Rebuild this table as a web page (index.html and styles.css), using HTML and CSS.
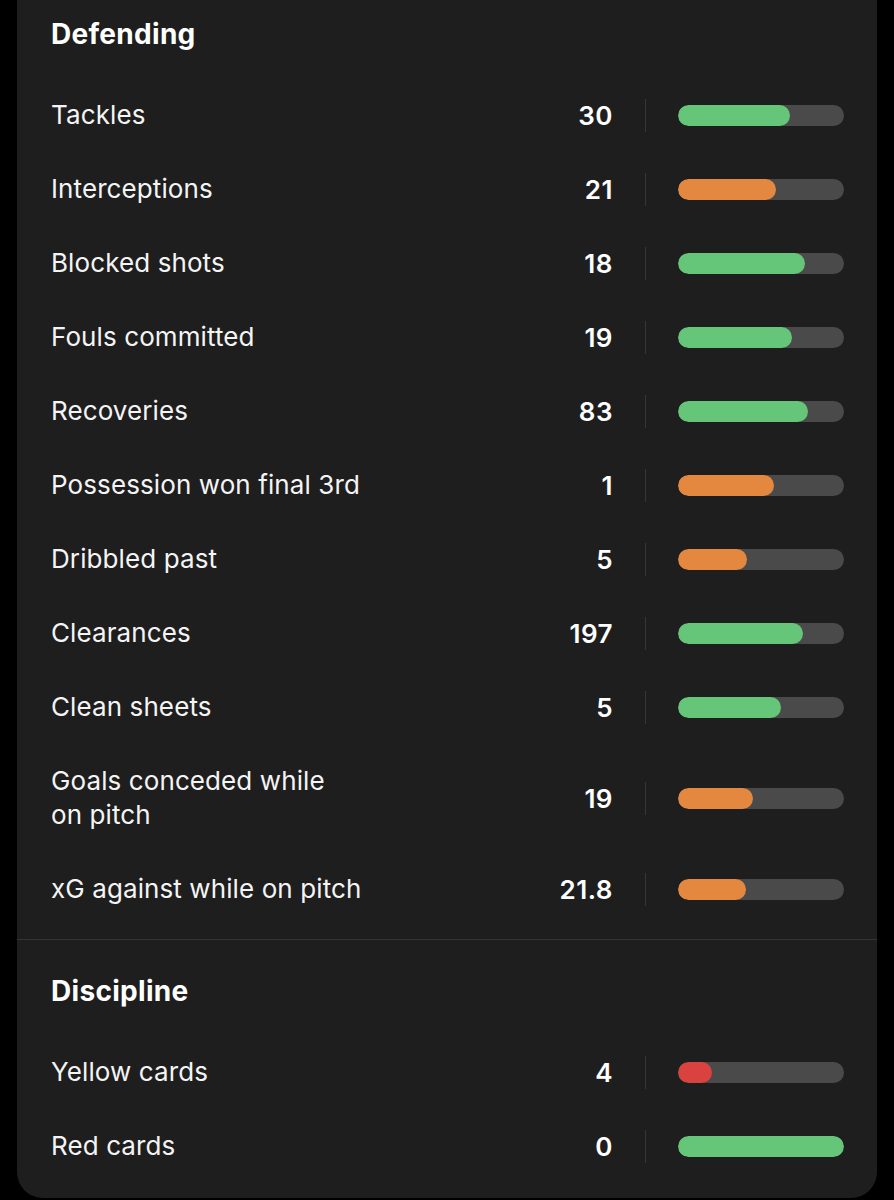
FILE: index.html
```html
<!DOCTYPE html>
<html>
<head>
<meta charset="utf-8">
<link rel="stylesheet" href="styles.css">
</head>
<body>
<div class="card">
  <section class="section first">
    <h2 class="heading">Defending</h2>
    <div class="row"><div class="label">Tackles</div><div class="num">30</div><div class="sep"></div><div class="bar"><div class="fill green" style="width:112px"></div></div></div>
    <div class="row"><div class="label">Interceptions</div><div class="num">21</div><div class="sep"></div><div class="bar"><div class="fill orange" style="width:98px"></div></div></div>
    <div class="row"><div class="label">Blocked shots</div><div class="num">18</div><div class="sep"></div><div class="bar"><div class="fill green" style="width:127px"></div></div></div>
    <div class="row"><div class="label">Fouls committed</div><div class="num">19</div><div class="sep"></div><div class="bar"><div class="fill green" style="width:114px"></div></div></div>
    <div class="row"><div class="label">Recoveries</div><div class="num">83</div><div class="sep"></div><div class="bar"><div class="fill green" style="width:130px"></div></div></div>
    <div class="row"><div class="label">Possession won final 3rd</div><div class="num">1</div><div class="sep"></div><div class="bar"><div class="fill orange" style="width:96px"></div></div></div>
    <div class="row"><div class="label">Dribbled past</div><div class="num">5</div><div class="sep"></div><div class="bar"><div class="fill orange" style="width:69px"></div></div></div>
    <div class="row"><div class="label">Clearances</div><div class="num">197</div><div class="sep"></div><div class="bar"><div class="fill green" style="width:125px"></div></div></div>
    <div class="row"><div class="label">Clean sheets</div><div class="num">5</div><div class="sep"></div><div class="bar"><div class="fill green" style="width:103px"></div></div></div>
    <div class="row"><div class="label">Goals conceded while<br>on pitch</div><div class="num">19</div><div class="sep"></div><div class="bar"><div class="fill orange" style="width:75px"></div></div></div>
    <div class="row"><div class="label">xG against while on pitch</div><div class="num">21.8</div><div class="sep"></div><div class="bar"><div class="fill orange" style="width:68px"></div></div></div>
  </section>
  <section class="section second">
    <h2 class="heading">Discipline</h2>
    <div class="row"><div class="label">Yellow cards</div><div class="num">4</div><div class="sep"></div><div class="bar"><div class="fill red" style="width:34px"></div></div></div>
    <div class="row"><div class="label">Red cards</div><div class="num">0</div><div class="sep"></div><div class="bar"><div class="fill green" style="width:166px"></div></div></div>
  </section>
</div>
</body>
</html>
```

FILE: styles.css
```css
html, body {
  margin: 0;
  padding: 0;
  background: #000;
}
body {
  font-family: Inter, "Noto Sans", sans-serif;
  color: #fff;
}
.card {
  margin: 0 17px;
  background: #1e1e1e;
  border-radius: 0 0 26px 26px;
  padding-bottom: 15px;
}
.section {
  padding: 0 33px 0 34px;
}
.section.first {
  padding-top: 17px;
  padding-bottom: 13px;
  border-bottom: 1px solid #343434;
}
.section.second {
  padding-top: 34px;
}
.heading {
  margin: 0 0 27px;
  font-size: 28px;
  line-height: 34px;
  font-weight: 700;
  letter-spacing: 0.3px;
}
.row {
  display: grid;
  grid-template-columns: 1fr auto 1px 166px;
  align-items: center;
  column-gap: 32px;
  padding: 20px 0;
}
.label {
  font-size: 26px;
  line-height: 34px;
  font-weight: 400;
  letter-spacing: 0.1px;
  color: #f4f4f4;
}
.num {
  font-size: 26px;
  line-height: 30px;
  font-weight: 600;
  letter-spacing: 0.5px;
  text-align: right;
  padding-top: 2px;
}
.sep {
  width: 1px;
  height: 33px;
  background: #363636;
}
.bar {
  height: 21px;
  border-radius: 11px;
  background: #4a4a4a;
  overflow: hidden;
}
.fill {
  height: 100%;
  border-radius: 11px;
}
.green { background: #65c579; }
.orange { background: #e5883f; }
.red { background: #d9423f; }
```
